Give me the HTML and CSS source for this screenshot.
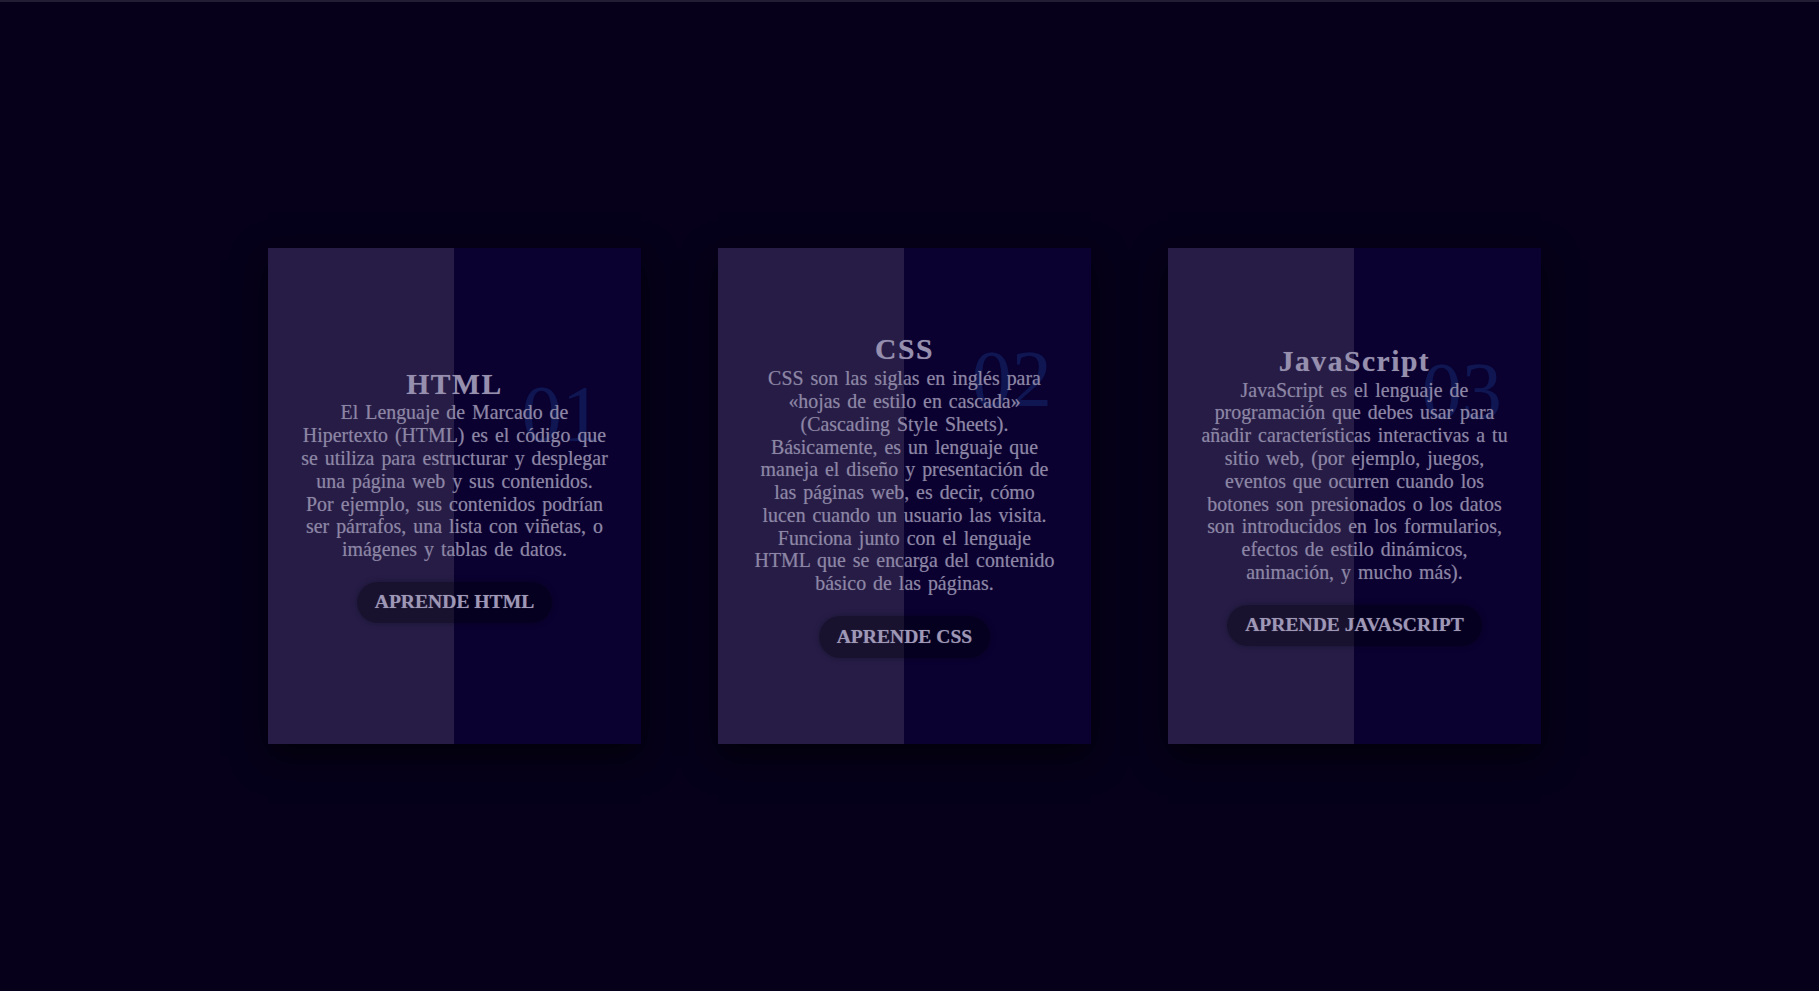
FILE: index.html
```html
<!DOCTYPE html>
<html lang="es">
<head>
<meta charset="utf-8">
<title>Cards</title>
<link rel="stylesheet" href="styles.css">
</head>
<body>
<div class="topline"></div>
<main class="stage">
  <section class="cards">
    <article class="card">
      <div class="content">
        <span class="num">01</span>
        <h2 class="title">HTML</h2>
        <p class="text">El Lenguaje de Marcado de Hipertexto (HTML) es el código que se utiliza para estructurar y desplegar una página web y sus contenidos. Por ejemplo, sus contenidos podrían ser párrafos, una lista con viñetas, o imágenes y tablas de datos.</p>
        <a class="btn" href="#">APRENDE HTML</a>
      </div>
    </article>
    <article class="card">
      <div class="content">
        <span class="num">02</span>
        <h2 class="title">CSS</h2>
        <p class="text">CSS son las siglas en inglés para «hojas de estilo en cascada» (Cascading Style Sheets). Básicamente, es un lenguaje que maneja el diseño y presentación de las páginas web, es decir, cómo lucen cuando un usuario las visita. Funciona junto con el lenguaje HTML que se encarga del contenido básico de las páginas.</p>
        <a class="btn" href="#">APRENDE CSS</a>
      </div>
    </article>
    <article class="card">
      <div class="content">
        <span class="num">03</span>
        <h2 class="title">JavaScript</h2>
        <p class="text">JavaScript es el lenguaje de programación que debes usar para añadir características interactivas a tu sitio web, (por ejemplo, juegos, eventos que ocurren cuando los botones son presionados o los datos son introducidos en los formularios, efectos de estilo dinámicos, animación, y mucho más).</p>
        <a class="btn" href="#">APRENDE JAVASCRIPT</a>
      </div>
    </article>
  </section>
</main>
</body>
</html>
```

FILE: styles.css
```css
* { box-sizing: border-box; }

html, body {
  margin: 0;
  padding: 0;
  background: #06001a;
  font-family: "Liberation Serif", "Times New Roman", serif;
}

.topline {
  height: 2px;
  background: #221d35;
}

.stage {
  min-height: 989px;
  display: flex;
  align-items: center;
  justify-content: center;
  padding-right: 10px;
}

.cards {
  display: flex;
  gap: 77px;
  margin-top: -2px;
}

.card {
  width: 373px;
  height: 496px;
  background: linear-gradient(90deg, #261c46 0%, #261c46 50%, #0a0130 50%, #0a0130 100%);
  box-shadow: 0 12px 32px rgba(0, 0, 0, 0.65);
  display: flex;
  align-items: center;
  justify-content: center;
  padding: 0 32.75px;
}

.content {
  position: relative;
  width: 100%;
  display: flex;
  flex-direction: column;
  align-items: center;
  text-align: center;
  margin-top: 0;
}

.num {
  position: absolute;
  left: 221px;
  top: 6px;
  font-size: 80px;
  line-height: 1;
  color: #0f1652;
  text-shadow: 0 0 1px rgba(15, 22, 82, 0.8);
  z-index: 0;
}

.title {
  position: relative;
  z-index: 1;
  margin: 0;
  font-size: 29.6px;
  line-height: 33.8px;
  font-weight: bold;
  letter-spacing: 1.5px;
  color: #9690ae;
  text-shadow: 0 0 1px rgba(150, 144, 174, 0.5);
}

.text {
  position: relative;
  z-index: 1;
  margin: 0 0 21px 0;
  font-size: 19.9px;
  line-height: 22.8px;
  word-spacing: 2px;
  color: #8c86a4;
  text-shadow: 0 0 1px rgba(140, 134, 164, 0.5);
}

.btn {
  position: relative;
  z-index: 1;
  display: inline-block;
  padding: 9.5px 18px;
  border-radius: 22px;
  background: rgba(0, 0, 0, 0.33);
  box-shadow: 0 0 6px rgba(0, 0, 0, 0.25);
  color: #9e98b6;
  font-size: 19.6px;
  line-height: 22.6px;
  font-weight: bold;
  text-decoration: none;
  text-shadow: 0 0 1px rgba(158, 152, 182, 0.5);
}
```
